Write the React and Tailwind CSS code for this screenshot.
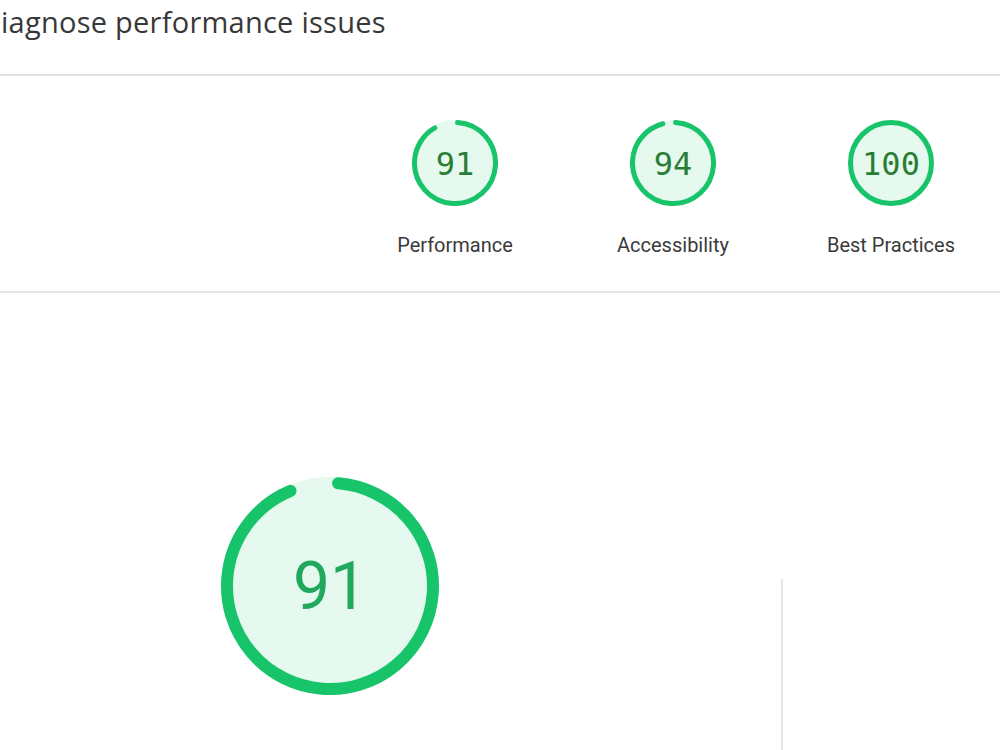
import React from "react";

const GREEN = "#17c46a";
const TRACK = "#e6f9ee";

// Circular score gauge: a tinted disc with a rounded arc drawn clockwise from the top.
function Gauge({ size, sw, start, sweep, children, textClass }) {
  const c = size / 2;
  const r = c - sw / 2;
  const circ = 2 * Math.PI * r;
  const full = sweep >= 360;
  return (
    <div className="relative" style={{ width: size, height: size }}>
      <svg width={size} height={size} className="block">
        <circle cx={c} cy={c} r={r} fill={TRACK} stroke={TRACK} strokeWidth={sw} />
        <circle
          cx={c}
          cy={c}
          r={r}
          fill="none"
          stroke={GREEN}
          strokeWidth={sw}
          strokeLinecap="round"
          strokeDasharray={full ? undefined : `${(sweep / 360) * circ} ${circ}`}
          transform={`rotate(${-90 + start} ${c} ${c})`}
        />
      </svg>
      <div className={`absolute inset-0 flex items-center justify-center ${textClass}`}>
        {children}
      </div>
    </div>
  );
}

const categories = [
  { label: "Performance", score: "91", start: 3.6, sweep: 326 },
  { label: "Accessibility", score: "94", start: 3.6, sweep: 341.3 },
  { label: "Best Practices", score: "100", start: 0, sweep: 360 },
];

export default function App() {
  return (
    <div className="w-[1000px] h-[750px] overflow-hidden bg-white">
      {/* page heading, scrolled slightly to the right */}
      <div className="h-[76px] border-b-2 border-[#e0e0e0] overflow-hidden">
        <h1
          className="pt-[7px] pl-[1px] text-[29px] leading-[29px] tracking-[0.25px] text-[#383838] whitespace-nowrap"
          style={{ fontFamily: '"Open Sans", sans-serif' }}
        >
          iagnose performance issues
        </h1>
      </div>

      {/* category gauges */}
      <div className="h-[217px] border-b-2 border-[#e6e6e6] flex pl-[346px] pt-[44px]">
        {categories.map((cat) => (
          <div key={cat.label} className="w-[218px] shrink-0 flex flex-col items-center">
            <Gauge
              size={86}
              sw={5}
              start={cat.start}
              sweep={cat.sweep}
              textClass="text-[32px] text-[#2a7d34] pt-[1px]"
            >
              <span style={{ fontFamily: '"DejaVu Sans Mono", monospace' }}>{cat.score}</span>
            </Gauge>
            <div
              className="mt-[29px] text-[20px] leading-[20px] text-[#3a3a3a] whitespace-nowrap"
              style={{ fontFamily: "Roboto, sans-serif" }}
            >
              {cat.label}
            </div>
          </div>
        ))}
      </div>

      {/* performance detail */}
      <div className="flex items-start">
        <div className="w-[781px] shrink-0 pl-[221px] pt-[184px]">
          <Gauge size={218} sw={12} start={4.5} sweep={332.5} textClass="text-[66px] text-[#20a95c]">
            <span style={{ fontFamily: "Roboto, sans-serif" }}>91</span>
          </Gauge>
        </div>
        <div className="w-[2px] h-[200px] mt-[286px] bg-[#e6e6e6]" />
      </div>
    </div>
  );
}
